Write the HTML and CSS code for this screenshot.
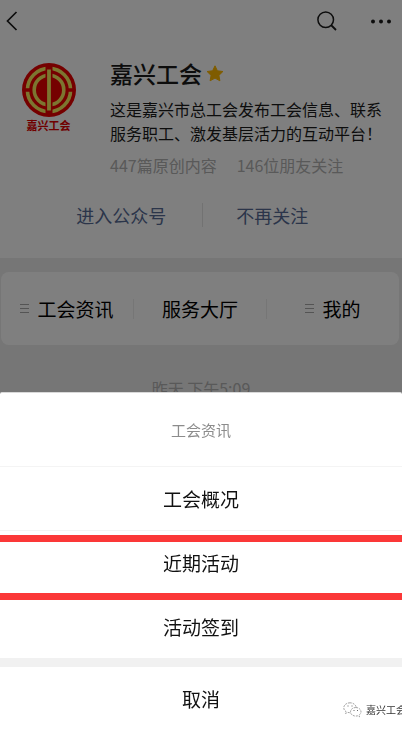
FILE: index.html
```html
<!DOCTYPE html>
<html lang="zh-CN">
<head>
  <meta charset="UTF-8">
  <meta name="viewport" content="width=device-width, initial-scale=1.0">
  <title>嘉兴工会</title>
  <link rel="stylesheet" href="styles.css">
</head>
<body>
  <div class="page">
    <!-- Top bar -->
    <header class="topbar">
      <button class="icon-btn" aria-label="返回">
        <svg width="12" height="20" viewBox="0 0 12 20" fill="none" stroke="#1a1a1a" stroke-width="1.7"><path d="M10.5 1 1.5 10l9 9"/></svg>
      </button>
      <div class="topbar-right">
        <button class="icon-btn" aria-label="搜索">
          <svg width="20" height="20" viewBox="0 0 20 20" fill="none" stroke="#1a1a1a" stroke-width="1.5"><circle cx="8.7" cy="8.7" r="7.8"/><path d="m14 14 5 5" stroke-width="1.8"/></svg>
        </button>
        <button class="icon-btn" aria-label="更多">
          <svg width="20" height="20" viewBox="0 0 20 20" fill="#1a1a1a"><circle cx="2" cy="10.5" r="2"/><circle cx="10" cy="10.5" r="2"/><circle cx="18" cy="10.5" r="2"/></svg>
        </button>
      </div>
    </header>

    <!-- Account profile -->
    <section class="profile">
      <div class="profile-main">
        <div class="avatar">
          <svg width="54" height="54" viewBox="0 0 54 54">
            <circle cx="27" cy="27" r="27" fill="#ea0000"/>
            <g fill="none" stroke="#f8ec60">
              <circle cx="27" cy="27" r="21.6" stroke-width="3.6"/>
              <circle cx="27" cy="27" r="14.8" stroke-width="3.6"/>
            </g>
            <path d="M2 27h7.500M44.500 27h7.500" stroke="#ea0000" stroke-width="3.4"/>
            <path d="M27 3v12M27 39v12" stroke="#ea0000" stroke-width="7"/>
            <path d="M27 6.500v41" stroke="#f8ec60" stroke-width="3.8"/>
          </svg>
          <span class="avatar-name">嘉兴工会</span>
        </div>
        <div class="info">
          <h1 class="name">嘉兴工会
            <svg width="18" height="17" viewBox="0 0 18 17" fill="#ffb900"><path d="m9 .8 2.4 5 5.5.7-4 3.9 1 5.4L9 13.1l-4.900 2.700 1-5.400-4-3.900 5.500-.7z" stroke="#ffb900" stroke-linejoin="round"/></svg>
          </h1>
          <p class="desc">这是嘉兴市总工会发布工会信息、联系服务职工、激发基层活力的互动平台！</p>
          <p class="stats"><span>447篇原创内容</span><span>146位朋友关注</span></p>
        </div>
      </div>
      <nav class="links">
        <a href="#">进入公众号</a>
        <a href="#">不再关注</a>
      </nav>
    </section>

    <!-- Account menu -->
    <nav class="menu">
      <button class="menu-item">
        <svg width="9" height="10" viewBox="0 0 9 10" stroke="#a8a8a8"><path d="M0 .5h9M0 4.500h9M0 8.500h9"/></svg>
        工会资讯
      </button>
      <button class="menu-item">服务大厅</button>
      <button class="menu-item">
        <svg width="9" height="10" viewBox="0 0 9 10" stroke="#a8a8a8"><path d="M0 .5h9M0 4.500h9M0 8.500h9"/></svg>
        我的
      </button>
    </nav>
    <p class="date">昨天 下午5:09</p>
  </div>

  <div class="mask"></div>

  <!-- Action sheet -->
  <div class="sheet" role="dialog" aria-labelledby="sheet-title">
    <h2 class="sheet-title" id="sheet-title">工会资讯</h2>
    <button class="sheet-item">工会概况</button>
    <button class="sheet-item marked">近期活动</button>
    <button class="sheet-item">活动签到</button>
    <button class="sheet-cancel">取消</button>
    <div class="watermark">
      <svg width="19" height="16" viewBox="0 0 19 16" fill="#fff" stroke="#8c8c8c" stroke-width=".8" stroke-dasharray="2 1">
        <path d="M7 .8C3.500.8.8 3 .8 5.800c0 1.600.8 2.900 2.200 3.800l-.6 2 2.200-1.200c.8.2 1.500.3 2.400.3 3.500 0 6.200-2.200 6.200-4.900S10.500.8 7 .8z"/>
        <path d="M12.800 5.500c-3 0-5.300 1.900-5.300 4.300s2.300 4.300 5.300 4.300c.7 0 1.400-.1 2-.3l1.800 1-.5-1.700c1.200-.8 1.900-2 1.900-3.300 0-2.400-2.300-4.300-5.200-4.300z"/>
        <path d="M5 3.500v1M9 3.500v1M11 8v1M14.500 8v1" stroke="#444" stroke-dasharray="none"/>
      </svg>
      <span>嘉兴工会</span>
    </div>
  </div>
</body>
</html>
```
FILE: styles.css
```css
* {
  box-sizing: border-box;
}
body {
  margin: 0;
  background-color: #ededed;
  color: #1a1a1a;
  font-family: "Noto Sans CJK SC", sans-serif;
  font-size: 16px;
}
h1, h2, p {
  margin: 0;
  font-weight: 400;
}
button {
  padding: 0;
  border: none;
  background: none;
  color: inherit;
  font-family: inherit;
  cursor: pointer;
}
svg {
  display: block;
  flex: none;
}
.page {
  height: 100vh;
  overflow: hidden;
}

/* Top bar */
.topbar {
  display: flex;
  justify-content: space-between;
  align-items: center;
  height: 41px;
  padding: 0 11px 0 6px;
  background-color: #fff;
}
.topbar-right {
  display: flex;
  gap: 34px;
}

/* Profile */
.profile {
  padding: 16px 20px 0 21px;
  background-color: #fff;
}
.profile-main {
  display: flex;
  gap: 34px;
}
.avatar {
  display: flex;
  flex-direction: column;
  align-items: center;
  width: 55px;
  padding-top: 6px;
}
.avatar-name {
  color: #e00000;
  font-size: 11px;
  font-weight: 700;
  line-height: 16px;
  white-space: nowrap;
}
.info {
  flex: 1;
  min-width: 0;
}
.name {
  display: flex;
  align-items: center;
  gap: 4px;
  font-size: 23px;
  font-weight: 500;
  line-height: 32px;
}
.desc {
  margin-top: 8px;
  line-height: 24px;
  /* lets the closing mark hang into the padding */
  margin-right: -4px;
}
.stats {
  display: flex;
  gap: 20px;
  margin-top: 8px;
  color: #b2b2b2;
  line-height: 24px;
}
.links {
  display: flex;
  height: 81px;
  padding-top: 26px;
  line-height: 24px;
}
.links a {
  width: 50%;
  height: 24px;
  color: #576b95;
  font-size: 18px;
  text-align: center;
  text-decoration: none;
}
.links a + a {
  padding-right: 40px;
  border-left: 1px solid #e5e5e5;
}
.links a:first-child {
  padding-left: 20px;
}

/* Menu card */
.menu {
  display: flex;
  align-items: center;
  height: 73px;
  margin: 14px 3px 0 1px;
  border-radius: 8px;
  background-color: #fff;
}
.menu-item {
  display: flex;
  flex: 1;
  justify-content: center;
  align-items: center;
  gap: 8px;
  height: 20px;
  color: #000;
  font-size: 19px;
}
.menu-item + .menu-item {
  border-left: 1px solid #ededed;
}
.date {
  margin-top: 31px;
  color: #b2b2b2;
  line-height: 24px;
  text-align: center;
}

.mask {
  position: fixed;
  inset: 0;
  background-color: rgba(0, 0, 0, 0.5);
}

/* Action sheet */
.sheet {
  position: fixed;
  right: 0;
  bottom: 0;
  left: 0;
  overflow: hidden;
  border-top: 1px solid #d9d9d9;
  border-radius: 2px 2px 0 0;
  background-color: #fff;
}
.sheet-title {
  color: #8c8c8c;
  font-size: 15px;
  line-height: 73px;
  text-align: center;
}
.sheet-item,
.sheet-cancel {
  display: block;
  width: 100%;
  color: #111;
  font-size: 19px;
}
.sheet-item {
  position: relative;
  height: 64px;
  border-top: 1px solid #f4f4f4;
}
.sheet-cancel {
  height: 71px;
  border-top: 9px solid #f1f1f1;
}

/* Red lines around the highlighted item */
.marked {
  z-index: 1;
}
.marked::after {
  content: "";
  position: absolute;
  top: 4px;
  right: 0;
  bottom: -6px;
  left: 0;
  border: solid #fb3838;
  border-width: 7px 0;
}
.watermark {
  position: absolute;
  right: -4px;
  bottom: 11px;
  display: flex;
  align-items: center;
  gap: 4px;
  color: #333;
  font-size: 10px;
  line-height: 16px;
  white-space: nowrap;
}
```
